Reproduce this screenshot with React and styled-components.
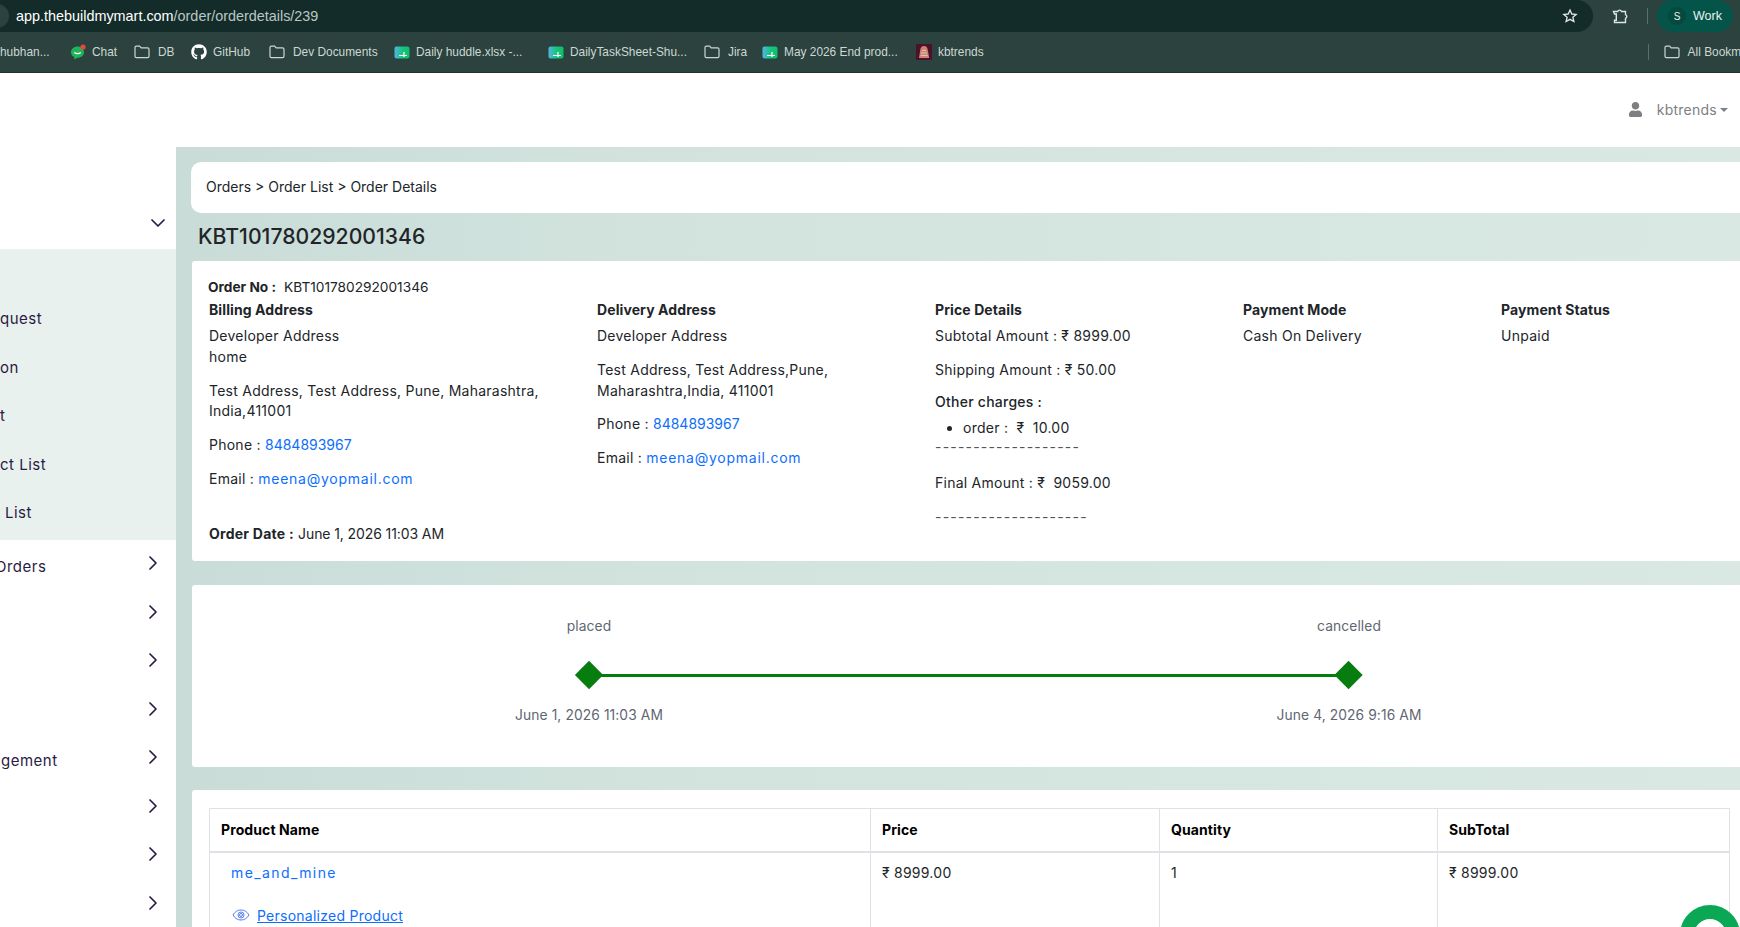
import React from 'react';
import styled, { createGlobalStyle } from 'styled-components';
import { ChevronRight, ChevronDown } from 'lucide-react';
import { FaGithub, FaUser } from 'react-icons/fa';

const Global = createGlobalStyle`
  html, body { margin: 0; padding: 0; height: 927px; overflow: hidden; background: #fff; }
  * { box-sizing: border-box; }
`;
const Page = styled.div`width:1740px;height:927px;overflow:hidden;display:flex;flex-direction:column;font-family:"Inter","Liberation Sans",sans-serif;font-size:14px;letter-spacing:.25px;color:#212529;`;
const Chrome = styled.div`height:32px;flex:none;background:#2b423e;display:flex;align-items:center;font-family:"Liberation Sans",sans-serif;letter-spacing:0;`;
const Omni = styled.div`width:1593px;flex:none;height:32px;background:#132c29;border-radius:0 16px 16px 0;display:flex;align-items:center;justify-content:space-between;padding:0 15px 0 16px;color:#fff;font-size:14.4px;position:relative;overflow:hidden;`;
const SiteBadge = styled.span`position:absolute;left:-15px;top:4px;width:24px;height:24px;border-radius:50%;background:#2b423e;`;
const Url = styled.span`color:#fff;span{color:#b9c7c3;}`;
const ChromeRight = styled.div`flex:1;display:flex;align-items:center;padding-left:19px;`;
const Divider = styled.div`width:1px;height:16px;background:#5a6f6a;margin:${p=>p.$m||0};`;
const Profile = styled.div`width:76px;height:32px;border-radius:16px;background:#04544a;display:flex;align-items:center;gap:7px;padding:0 11px;color:#e8f3ef;font-size:12.5px;`;
const Avatar = styled.span`width:18px;height:18px;border-radius:50%;display:flex;align-items:center;justify-content:center;font-size:10px;background:#05493f;flex:none;`;
const Bookmarks = styled.div`height:41px;flex:none;background:#2b423e;border-bottom:1px solid #1f3330;display:flex;align-items:center;overflow:hidden;font-family:"Liberation Sans",sans-serif;font-size:11.9px;letter-spacing:0;color:#cdd8d4;`;
const Mark = styled.div`display:flex;align-items:center;gap:${p=>p.$gap||6}px;margin-left:${p=>p.$ml||0}px;white-space:nowrap;width:${p=>p.$w?p.$w+'px':'auto'};flex:none;`;
const Top = styled.div`height:74px;flex:none;display:flex;justify-content:flex-end;align-items:center;padding:0 12px 1px 0;color:#7d7f82;`;
const UserName = styled.span`margin-left:14px;`;
const Caret = styled.span`width:0;height:0;margin-left:3px;border-left:4px solid transparent;border-right:4px solid transparent;border-top:4px solid #7d7f82;`;
const Body = styled.div`flex:1;display:flex;min-height:0;`;
const Side = styled.div`width:176px;flex:none;color:#2b1a43;font-size:15px;letter-spacing:.5px;position:relative;`;
const SideHead = styled.div`height:102px;display:flex;justify-content:flex-end;align-items:flex-end;padding:0 6.5px 14px 0;`;
const Sub = styled.div`height:291px;background:#e8f1ee;padding-top:59px;`;
const SubItem = styled.div`height:48.5px;line-height:22px;white-space:nowrap;margin-left:${p=>p.$ml||0}px;`;
const Row = styled.div`height:48.5px;display:flex;justify-content:space-between;align-items:flex-start;padding:0 11px 0 0;white-space:nowrap;`;
const RowText = styled.span`margin-top:17px;margin-left:${p=>p.$ml||0}px;`;
const RowChevron = styled(ChevronRight)`margin-top:11px;flex:none;`;
const Main = styled.div`flex:1;min-width:0;background:linear-gradient(90deg,#c9dcd7 0%,#d2e3de 30%,#d9e8e2 100%);padding:15px 0 0 15px;overflow:hidden;`;
const Crumb = styled.div`height:51px;background:#fff;border-radius:10px 0 0 10px;display:flex;align-items:center;padding:0 0 2px 15px;letter-spacing:0;`;
const Title = styled.h1`margin:0;font-size:21.2px;font-weight:500;letter-spacing:0;height:48px;padding:10px 0 0 7px;line-height:26px;color:#212529;`;
const Card = styled.div`background:#fff;margin-left:1px;border-radius:3px 0 0 3px;height:${p=>p.$h}px;margin-bottom:${p=>p.$mb||24}px;position:relative;`;
const Details = styled(Card)`padding:16px 0 0 16px;`;
const Bold = styled.b`font-weight:700;`;
const DateText = styled.span`letter-spacing:-.1px;`;
const OrderNo = styled.div`height:22px;line-height:20px;font-size:13.7px;letter-spacing:0;span{margin-left:8px;}`;
const Cols = styled.div`display:grid;grid-template-columns:388px 338px 308px 258px 200px;padding-left:1px;`;
const Col = styled.div`line-height:21px;`;
const H = styled.div`font-weight:700;letter-spacing:.1px;height:27px;line-height:21px;`;
const P = styled.p`margin:0 0 13px;line-height:20.8px;width:${p=>p.$w||'auto'};`;
const A = styled.a`color:#0d6efd;letter-spacing:0;`;
const Mail = styled(A)`letter-spacing:.75px;`;
const Charges = styled.div`font-weight:500;margin-top:-3px;`;
const Ul = styled.ul`margin:5px 0 0;padding:0 0 0 28px;line-height:21px;`;
const Dash = styled.div`color:#555;letter-spacing:1.2px;line-height:18px;`;
const FinalAmount = styled(P)`margin:17.5px 0 14.5px;`;
const OrderDate = styled.div`margin-top:33px;line-height:21px;`;
const Timeline = styled(Card)`display:flex;`;
const Stop = styled.div`position:absolute;top:31px;left:${p=>p.$x}px;transform:translateX(-50%);display:flex;flex-direction:column;align-items:center;color:#5f6673;font-size:13.8px;letter-spacing:.1px;white-space:nowrap;`;
const StopLabel = styled.div`height:20px;line-height:20px;`;
const Diamond = styled.div`width:20px;height:20px;margin:29px 0 20px;background:#077d0f;transform:rotate(45deg);z-index:1;`;
const Line = styled.div`position:absolute;left:397px;top:89px;width:760px;height:3px;background:#077d0f;`;
const TableWrap = styled(Card)`padding:18px 0 0 17px;height:200px;margin-bottom:0;`;
const Table = styled.table`border-collapse:collapse;width:1520px;table-layout:fixed;`;
const Th = styled.th`text-align:left;font-weight:700;letter-spacing:.1px;color:#000;height:43px;padding:0 11px;border:1px solid #dee2e6;border-bottom-width:2px;width:${p=>p.$w}px;`;
const Td = styled.td`vertical-align:top;padding:9px 11px;border:1px solid #dee2e6;height:100px;line-height:21px;`;
const Name = styled.a`display:block;color:#0d6efd;letter-spacing:1.4px;margin:0 0 22px 10px;`;
const Pers = styled.div`display:flex;align-items:center;gap:7px;margin-left:11px;color:#0d6efd;a{text-decoration:underline;}`;
const Chat = styled.div`position:absolute;right:0;bottom:-38px;width:60px;height:60px;border-radius:50%;border:14px solid #0aa854;background:#fff;z-index:2;`;
const Stage = styled.div`position:relative;flex:1;min-width:0;display:flex;`;

const Folder = () => <svg width="16" height="14" viewBox="0 0 16 14" fill="none" stroke="#cdd8d4" strokeWidth="1.2"><path d="M1 2.500c0-.8.6-1.400 1.400-1.400h3.200l1.600 1.800h6.400c.8 0 1.400.6 1.400 1.400v7c0 .8-.6 1.400-1.400 1.400H2.400c-.8 0-1.400-.6-1.400-1.400z"/></svg>;
const Sheet = () => <svg width="16" height="13" viewBox="0 0 16 13"><defs><linearGradient id="sheetGrad" x1="0" x2="1" y1="0" y2="0"><stop offset="0" stopColor="#4fb6e0"/><stop offset=".55" stopColor="#17c47c"/><stop offset="1" stopColor="#0fbf68"/></linearGradient></defs><rect x=".5" y=".5" width="15" height="12" rx="2" fill="url(#sheetGrad)"/><path d="M5 9.500h8M10 6v5" stroke="#fff" strokeWidth="1.200" fill="none"/></svg>;
const ChatIco = () => <svg width="16" height="16" viewBox="0 0 16 16"><path d="M7.500 2.500C3.900 2.500 1 5 1 8.200c0 2.200 1.300 3.900 3.200 4.900v2.400l3.200-1.800h.1c3.600 0 6.500-2.400 6.500-5.500S11.100 2.500 7.500 2.500z" fill="#1fb35c"/><path d="M4.300 8.500c1.800 1.600 4.800 1.600 6.500 0" stroke="#fff" strokeWidth="1.200" fill="none"/><circle cx="13" cy="3" r="2.600" fill="#e8453c"/></svg>;
const Kb = () => <svg width="16" height="16" viewBox="0 0 16 16"><rect width="16" height="16" fill="#4c1228"/><path d="M8 2c2.400 0 3.800 2.200 3.800 4.200l1.400 7.800H3l1.200-7.800C4.200 4.200 5.600 2 8 2z" fill="#c98377"/><path d="M5 9h6M4.800 11.500h6.800M6 6.500h4" stroke="#e8c2a8" strokeWidth="1"/></svg>;
const Star = () => <svg width="16" height="16" viewBox="0 0 24 24" fill="none" stroke="#dfe7e4" strokeWidth="2"><path d="M12 3l2.700 6 6.500.6-4.900 4.300 1.500 6.400L12 17l-5.800 3.300 1.500-6.400L2.800 9.600 9.300 9z"/></svg>;
const Ext = () => <svg width="17" height="17" viewBox="0 0 17 17" fill="none" stroke="#dfe7e4" strokeWidth="1.400"><path d="M1.500 3.500h4.200a2 2 0 0 1 3.800 0h4v3.200a1.900 1.900 0 0 1 0 3.600v4.200H2.500v-2.300h1.800V6H2.500z"/></svg>;
const Eye = () => <svg width="18" height="18" viewBox="0 0 18 18" fill="none" stroke="#5a80ee" strokeWidth="1"><path d="M1 9c2-3.400 4.700-5 8-5s6 1.600 8 5c-2 3.400-4.700 5-8 5s-6-1.600-8-5z"/><circle cx="9" cy="9" r="3"/><circle cx="9" cy="9" r="1.500"/></svg>;

const rows = [
  ['Orders', -5], ['', 0], ['', 0], ['', 0],
  ['gement', 1], ['', 0], ['', 0], ['', 0],
];

export default function App() {
  return (
    <Page>
      <Global />
      <Chrome>
        <Omni>
          <SiteBadge />
          <Url>app.thebuildmymart.com<span>/order/orderdetails/239</span></Url>
          <Star />
        </Omni>
        <ChromeRight>
          <Ext /><Divider $m="0 9px 0 18px" />
          <Profile><Avatar>S</Avatar>Work</Profile>
        </ChromeRight>
      </Chrome>
      <Bookmarks>
        <Mark $w={50}>hubhan...</Mark>
        <Mark $ml={20} $w={64}><ChatIco />Chat</Mark>
        <Mark $ml={0} $w={50} $gap={8}><Folder />DB</Mark>
        <Mark $ml={7} $w={76}><FaGithub size={16} color="#fff" />GitHub</Mark>
        <Mark $ml={2} $w={123} $gap={8}><Folder />Dev Documents</Mark>
        <Mark $ml={2} $w={155}><Sheet />Daily huddle.xlsx -...</Mark>
        <Mark $ml={-1} $w={155}><Sheet />DailyTaskSheet-Shu...</Mark>
        <Mark $ml={1} $w={59} $gap={8}><Folder />Jira</Mark>
        <Mark $ml={-1} $w={152}><Sheet />May 2026 End prod...</Mark>
        <Mark $ml={2}><Kb />kbtrends</Mark>
        <Mark $ml={664}><Divider /></Mark>
        <Mark $ml={15} $gap={8}><Folder />All Bookmarks</Mark>
      </Bookmarks>
      <Top>
        <FaUser size={15} color="#7d7f82" />
        <UserName>kbtrends</UserName>
        <Caret />
      </Top>
      <Body>
        <Side>
          <SideHead><ChevronDown size={24} strokeWidth={1.7} /></SideHead>
          <Sub>
            <SubItem>quest</SubItem>
            <SubItem>on</SubItem>
            <SubItem>t</SubItem>
            <SubItem>ct List</SubItem>
            <SubItem $ml={5}>List</SubItem>
          </Sub>
          {rows.map((r, i) => (
            <Row key={i}>
              <RowText $ml={r[1]}>{r[0]}</RowText>
              <RowChevron size={24} strokeWidth={1.7} />
            </Row>
          ))}
        </Side>
        <Stage>
          <Main>
            <Crumb>Orders &gt; Order List &gt; Order Details</Crumb>
            <Title>KBT101780292001346</Title>
            <Details $h={300}>
              <OrderNo><Bold>Order No :</Bold><span>KBT101780292001346</span></OrderNo>
              <Cols>
                <Col>
                  <H>Billing Address</H>
                  <P>Developer Address<br />home</P>
                  <P $w="345px">Test Address, Test Address, Pune, Maharashtra, India,411001</P>
                  <P>Phone : <A>8484893967</A></P>
                  <P>Email : <Mail>meena@yopmail.com</Mail></P>
                  <OrderDate><Bold>Order Date :</Bold> <DateText>June 1, 2026 11:03 AM</DateText></OrderDate>
                </Col>
                <Col>
                  <H>Delivery Address</H>
                  <P>Developer Address</P>
                  <P $w="260px">Test Address, Test Address,Pune, Maharashtra,India, 411001</P>
                  <P>Phone : <A>8484893967</A></P>
                  <P>Email : <Mail>meena@yopmail.com</Mail></P>
                </Col>
                <Col>
                  <H>Price Details</H>
                  <P>Subtotal Amount : ₹ 8999.00</P>
                  <P>Shipping Amount : ₹ 50.00</P>
                  <Charges>Other charges :</Charges>
                  <Ul><li>order :&nbsp; ₹&nbsp; 10.00</li></Ul>
                  <Dash>-------------------</Dash>
                  <FinalAmount>Final Amount : ₹&nbsp; 9059.00</FinalAmount>
                  <Dash>--------------------</Dash>
                </Col>
                <Col>
                  <H>Payment Mode</H>
                  <P>Cash On Delivery</P>
                </Col>
                <Col>
                  <H>Payment Status</H>
                  <P>Unpaid</P>
                </Col>
              </Cols>
            </Details>
            <Timeline $h={182} $mb={23}>
              <Stop $x={397}><StopLabel>placed</StopLabel><Diamond /><StopLabel>June 1, 2026 11:03 AM</StopLabel></Stop>
              <Stop $x={1157}><StopLabel>cancelled</StopLabel><Diamond /><StopLabel>June 4, 2026 9:16 AM</StopLabel></Stop>
              <Line />
            </Timeline>
            <TableWrap>
              <Table>
                <thead>
                  <tr>
                    <Th $w={661}>Product Name</Th>
                    <Th $w={289}>Price</Th>
                    <Th $w={278}>Quantity</Th>
                    <Th $w={292}>SubTotal</Th>
                  </tr>
                </thead>
                <tbody>
                  <tr>
                    <Td>
                      <Name>me_and_mine</Name>
                      <Pers><Eye /><a>Personalized Product</a></Pers>
                    </Td>
                    <Td>₹ 8999.00</Td>
                    <Td>1</Td>
                    <Td>₹ 8999.00</Td>
                  </tr>
                </tbody>
              </Table>
            </TableWrap>
          </Main>
          <Chat />
        </Stage>
      </Body>
    </Page>
  );
}
